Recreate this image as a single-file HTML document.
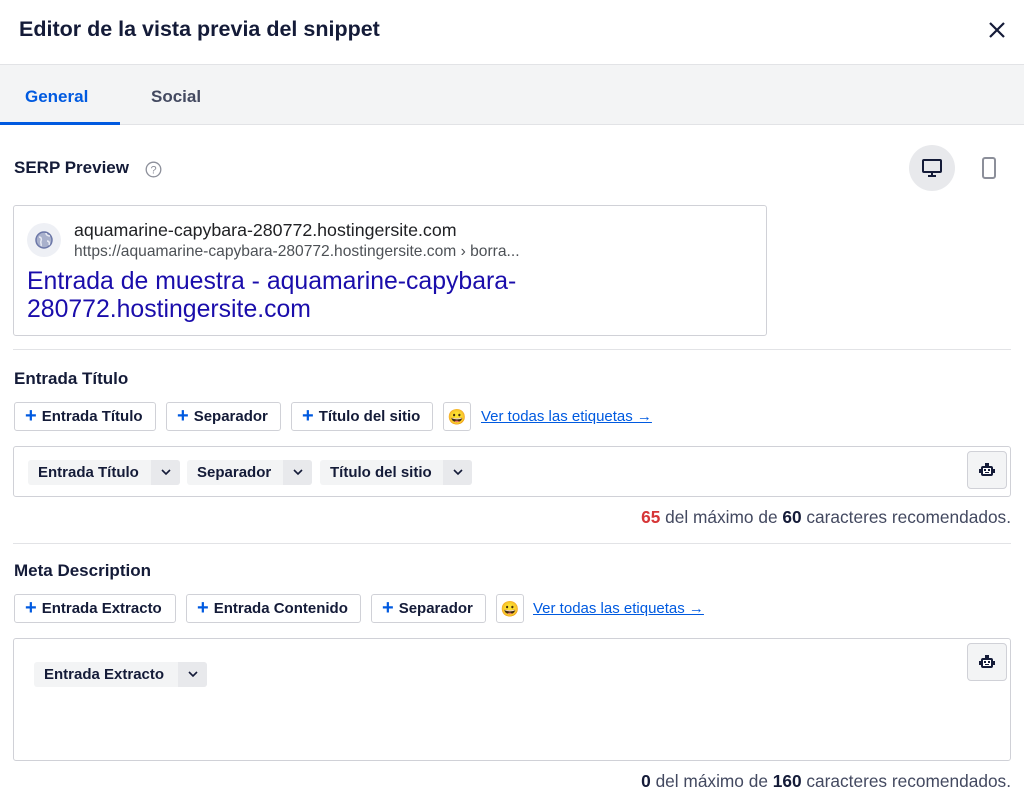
<!DOCTYPE html><html><head><meta charset="utf-8"><style>
*{box-sizing:border-box;margin:0;padding:0}
body{width:1024px;height:808px;background:#fff;font-family:"Liberation Sans",Arial,sans-serif;color:#141b38;position:relative;overflow:hidden}
.a{position:absolute}
.b{font-weight:bold}
.btn{position:absolute;height:29px;border:1px solid #d0d1d7;border-radius:3px;background:#fff;font-size:15px;font-weight:bold;color:#141b38;display:flex;align-items:center;padding:0 10px;white-space:nowrap}
.btn i{color:#005ae0;font-style:normal;font-size:20px;margin-right:5px;font-weight:bold}
.tag{position:absolute;height:25px;background:#f3f4f5;border-radius:3px;font-size:15px;font-weight:bold;display:flex;align-items:center;padding-left:10px;white-space:nowrap}
.tag span.c{margin-left:10px;width:29px;height:25px;background:#e8e9ec;display:flex;align-items:center;justify-content:center;border-radius:0 3px 3px 0}
.emo{position:absolute;width:28px;height:29px;border:1px solid #d0d1d7;border-radius:3px;display:flex;align-items:center;justify-content:center;font-size:15px}
.lnk{position:absolute;color:#005ae0;text-decoration:underline;font-size:15px}
.robot{position:absolute;width:40px;height:38px;border:1px solid #d0d1d7;border-radius:4px;background:#f3f4f5;display:flex;align-items:center;justify-content:center}
.h{position:absolute;font-weight:bold;font-size:17px}
</style></head><body>
<div class="a b" style="left:19px;top:17px;font-size:21.5px">Editor de la vista previa del snippet</div>
<svg class="a" style="left:988px;top:21px" width="18" height="18" viewBox="0 0 18 18"><path d="M2 2L16 16M16 2L2 16" stroke="#141b38" stroke-width="2.2"/></svg>
<div class="a" style="left:0;top:64px;width:1024px;height:61px;background:#f3f4f5;border-top:1px solid #e2e3e6;border-bottom:1px solid #e2e3e6"></div>
<div class="a b" style="left:25px;top:87px;font-size:17px;color:#005ae0">General</div>
<div class="a" style="left:0;top:122px;width:120px;height:3px;background:#005ae0"></div>
<div class="a b" style="left:151px;top:87px;font-size:17px;color:#434960">Social</div>
<div class="h" style="left:14px;top:158px">SERP Preview</div>
<svg class="a" style="left:145px;top:161px" width="17" height="17" viewBox="0 0 17 17"><circle cx="8.5" cy="8.5" r="7.3" fill="none" stroke="#8c8f9a" stroke-width="1.3"/><text x="8.5" y="12.5" font-size="11" text-anchor="middle" fill="#8c8f9a" font-family="Liberation Sans">?</text></svg>
<div class="a" style="left:909px;top:145px;width:46px;height:46px;border-radius:50%;background:#e8e9ec"></div>
<svg class="a" style="left:921px;top:157px" width="22" height="22" viewBox="0 0 22 22"><rect x="2" y="3" width="18" height="12" rx="1" fill="none" stroke="#141b38" stroke-width="2"/><path d="M11 15v3M7 19h8" stroke="#141b38" stroke-width="2"/></svg>
<svg class="a" style="left:981px;top:156px" width="16" height="24" viewBox="0 0 16 24"><rect x="2" y="2" width="12" height="20" rx="2" fill="none" stroke="#8c8f9a" stroke-width="2"/></svg>
<div class="a" style="left:13px;top:205px;width:754px;height:131px;border:1px solid #d0d1d7;border-radius:3px"></div>
<div class="a" style="left:27px;top:223px;width:34px;height:34px;border-radius:50%;background:#eef0f5"></div>
<svg class="a" style="left:34px;top:230px" width="20" height="20" viewBox="0 0 20 20"><circle cx="10" cy="10" r="8" fill="#a9b1cc" stroke="#6b77a8" stroke-width="1.5"/><path d="M5 7c2 0 3 2 2 4s1 3 0 5M12 3c0 2 2 3 4 3M13 11c2 0 3 2 2 4" stroke="#e8ebf4" stroke-width="1.5" fill="none"/></svg>
<div class="a" style="left:74px;top:220px;font-size:17.8px;color:#202124;white-space:nowrap">aquamarine-capybara-280772.hostingersite.com</div>
<div class="a" style="left:74px;top:243px;font-size:15.6px;color:#4d5156;white-space:nowrap">https://aquamarine-capybara-280772.hostingersite.com › borra...</div>
<div class="a" style="left:27px;top:268px;font-size:24.8px;line-height:28px;color:#1a0dab">Entrada de muestra - aquamarine-capybara-<br>280772.hostingersite.com</div>
<div class="a" style="left:13px;top:349px;width:998px;height:1px;background:#e2e3e6"></div>
<div class="h" style="left:14px;top:369px">Entrada Título</div>
<div class="btn" style="left:14px;top:402px;width:142px"><i>+</i>Entrada Título</div>
<div class="btn" style="left:166px;top:402px;width:115px"><i>+</i>Separador</div>
<div class="btn" style="left:291px;top:402px;width:142px"><i>+</i>Título del sitio</div>
<div class="emo" style="left:443px;top:402px">😀</div>
<div class="lnk" style="left:481px;top:408px">Ver todas las etiquetas →</div>
<div class="a" style="left:13px;top:446px;width:998px;height:51px;border:1px solid #d0d1d7;border-radius:3px"></div>
<div class="tag" style="left:28px;top:460px;width:152px">Entrada Título<span class="c" style="margin-left:auto"><svg width="10" height="7" viewBox="0 0 10 7"><path d="M1 1l4 4 4-4" stroke="#141b38" stroke-width="1.6" fill="none"/></svg></span></div>
<div class="tag" style="left:187px;top:460px;width:125px">Separador<span class="c" style="margin-left:auto"><svg width="10" height="7" viewBox="0 0 10 7"><path d="M1 1l4 4 4-4" stroke="#141b38" stroke-width="1.6" fill="none"/></svg></span></div>
<div class="tag" style="left:320px;top:460px;width:152px">Título del sitio<span class="c" style="margin-left:auto"><svg width="10" height="7" viewBox="0 0 10 7"><path d="M1 1l4 4 4-4" stroke="#141b38" stroke-width="1.6" fill="none"/></svg></span></div>
<div class="robot" style="left:967px;top:451px"><svg width="16" height="16" viewBox="0 0 16 16"><rect x="2" y="4" width="12" height="10" rx="2" fill="#141b38"/><rect x="6" y="1" width="4" height="3" fill="#141b38"/><rect x="0" y="7" width="2" height="4" fill="#141b38"/><rect x="14" y="7" width="2" height="4" fill="#141b38"/><rect x="4" y="6" width="8" height="6" fill="#fff"/><rect x="5" y="7" width="2" height="2" fill="#141b38"/><rect x="9" y="7" width="2" height="2" fill="#141b38"/><rect x="6" y="10" width="4" height="1" fill="#141b38"/></svg></div>
<div class="a" style="right:13px;top:507px;font-size:17.3px;color:#434960;white-space:nowrap"><b style="color:#d63638">65</b> del máximo de <b style="color:#141b38">60</b> caracteres recomendados.</div>
<div class="a" style="left:13px;top:543px;width:998px;height:1px;background:#e2e3e6"></div>
<div class="h" style="left:14px;top:561px">Meta Description</div>
<div class="btn" style="left:14px;top:594px;width:162px"><i>+</i>Entrada Extracto</div>
<div class="btn" style="left:186px;top:594px;width:175px"><i>+</i>Entrada Contenido</div>
<div class="btn" style="left:371px;top:594px;width:115px"><i>+</i>Separador</div>
<div class="emo" style="left:496px;top:594px">😀</div>
<div class="lnk" style="left:533px;top:600px">Ver todas las etiquetas →</div>
<div class="a" style="left:13px;top:638px;width:998px;height:123px;border:1px solid #d0d1d7;border-radius:3px"></div>
<div class="tag" style="left:34px;top:662px;width:173px">Entrada Extracto<span class="c" style="margin-left:auto"><svg width="10" height="7" viewBox="0 0 10 7"><path d="M1 1l4 4 4-4" stroke="#141b38" stroke-width="1.6" fill="none"/></svg></span></div>
<div class="robot" style="left:967px;top:643px"><svg width="16" height="16" viewBox="0 0 16 16"><rect x="2" y="4" width="12" height="10" rx="2" fill="#141b38"/><rect x="6" y="1" width="4" height="3" fill="#141b38"/><rect x="0" y="7" width="2" height="4" fill="#141b38"/><rect x="14" y="7" width="2" height="4" fill="#141b38"/><rect x="4" y="6" width="8" height="6" fill="#fff"/><rect x="5" y="7" width="2" height="2" fill="#141b38"/><rect x="9" y="7" width="2" height="2" fill="#141b38"/><rect x="6" y="10" width="4" height="1" fill="#141b38"/></svg></div>
<div class="a" style="right:13px;top:771px;font-size:17.3px;color:#434960;white-space:nowrap"><b style="color:#141b38">0</b> del máximo de <b style="color:#141b38">160</b> caracteres recomendados.</div>
</body></html>
